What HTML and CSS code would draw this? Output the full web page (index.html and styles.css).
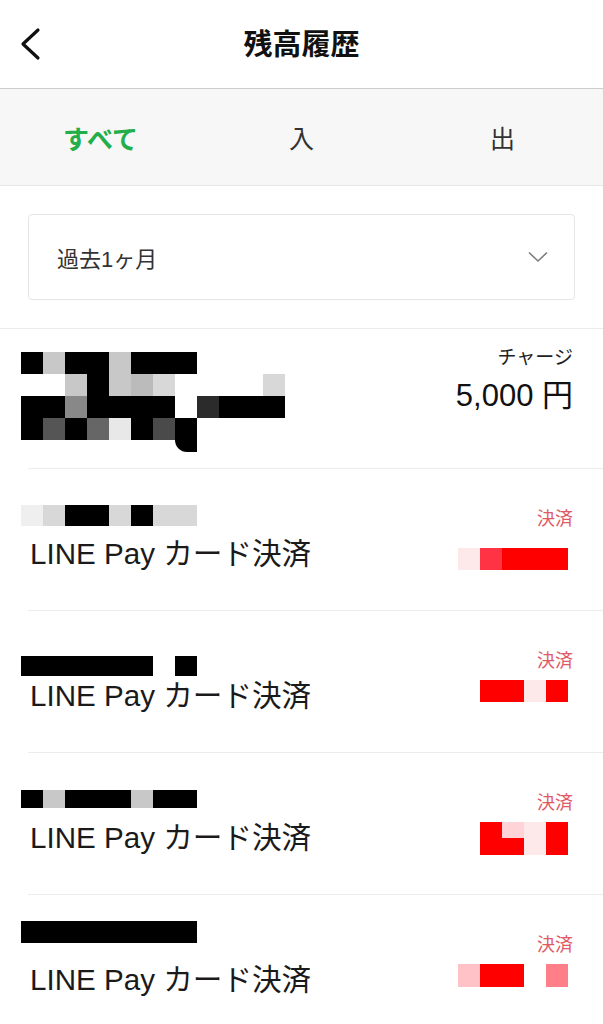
FILE: index.html
```html
<!DOCTYPE html>
<html lang="ja">
<head>
<meta charset="utf-8">
<title>残高履歴</title>
<link rel="stylesheet" href="styles.css">
</head>
<body>
<header class="topbar">
  <button class="back" aria-label="戻る">
    <svg width="24" height="34" viewBox="0 0 24 34"><path d="M20 3 L5 17 L20 31" fill="none" stroke="#111" stroke-width="3.2" stroke-linecap="round" stroke-linejoin="round"/></svg>
  </button>
  <h1 class="title">残高履歴</h1>
  <span class="spacer"></span>
</header>

<nav class="tabs">
  <span class="tab active">すべて</span>
  <span class="tab">入</span>
  <span class="tab">出</span>
</nav>

<section class="filter">
  <div class="select">
    <span>過去1ヶ月</span>
    <svg width="20" height="12" viewBox="0 0 20 12"><path d="M1 1.5 L10 10 L19 1.5" fill="none" stroke="#7d7d7d" stroke-width="1.6"/></svg>
  </div>
</section>

<ul class="history">
  <li class="txn txn-charge">
    <div class="charge-left">
      <div class="mosaic cols-12 big">
        <i class="k"></i><i class="gc"></i><i class="k"></i><i class="k"></i><i class="gc"></i><i class="k"></i><i class="k"></i><i class="k"></i><i></i><i></i><i></i><i></i>
        <i></i><i></i><i class="gc"></i><i class="k"></i><i class="gc"></i><i class="gb"></i><i class="gd"></i><i></i><i></i><i></i><i></i><i class="gd"></i>
        <i class="k"></i><i class="k"></i><i class="g8"></i><i class="k"></i><i class="k"></i><i class="k"></i><i class="k"></i><i></i><i class="d2"></i><i class="k"></i><i class="k"></i><i class="k"></i>
        <i class="k"></i><i class="d5"></i><i class="k"></i><i class="d6"></i><i class="ge"></i><i class="k"></i><i class="d4"></i><i class="k"></i><i></i><i></i><i></i><i></i>
        <i></i><i></i><i></i><i></i><i></i><i></i><i></i><i class="k tail"></i><i></i><i></i><i></i><i></i>
      </div>
    </div>
    <div class="charge-right">
      <span class="charge-kind">チャージ</span>
      <span class="charge-amount">5,000 円</span>
    </div>
  </li>

  <li class="txn">
    <div class="txn-left">
      <div class="mosaic cols-8 name off-36 h21">
        <i class="gf"></i><i class="gd"></i><i class="k"></i><i class="k"></i><i class="gd"></i><i class="k"></i><i class="gd"></i><i class="gd"></i>
      </div>
      <span class="label">LINE Pay カード決済</span>
    </div>
    <div class="txn-right">
      <span class="kind">決済</span>
      <div class="mosaic cols-5 amount lower h22">
        <i class="p1"></i><i class="r3"></i><i class="r"></i><i class="r"></i><i class="r"></i>
      </div>
    </div>
  </li>

  <li class="txn">
    <div class="txn-left">
      <div class="mosaic cols-8 name off-45 h20">
        <i class="k"></i><i class="k"></i><i class="k"></i><i class="k"></i><i class="k"></i><i class="k"></i><i></i><i class="k"></i>
      </div>
      <span class="label">LINE Pay カード決済</span>
    </div>
    <div class="txn-right">
      <span class="kind">決済</span>
      <div class="mosaic cols-5 amount h22">
        <i></i><i class="r"></i><i class="r"></i><i class="p1"></i><i class="r"></i>
      </div>
    </div>
  </li>

  <li class="txn">
    <div class="txn-left">
      <div class="mosaic cols-8 name off-37 h18">
        <i class="k"></i><i class="gc"></i><i class="k"></i><i class="k"></i><i class="k"></i><i class="gc"></i><i class="k"></i><i class="k"></i>
      </div>
      <span class="label">LINE Pay カード決済</span>
    </div>
    <div class="txn-right">
      <span class="kind">決済</span>
      <div class="mosaic cols-5 amount two-rows">
        <i></i><i class="r"></i><i class="p2"></i><i class="p1"></i><i class="r"></i>
        <i></i><i class="r"></i><i class="r"></i><i class="p1"></i><i class="r"></i>
      </div>
    </div>
  </li>

  <li class="txn">
    <div class="txn-left">
      <div class="mosaic cols-8 name off-26 h22">
        <i class="k"></i><i class="k"></i><i class="k"></i><i class="k"></i><i class="k"></i><i class="k"></i><i class="k"></i><i class="k"></i>
      </div>
      <span class="label">LINE Pay カード決済</span>
    </div>
    <div class="txn-right">
      <span class="kind">決済</span>
      <div class="mosaic cols-5 amount h23">
        <i class="p3"></i><i class="r"></i><i class="r"></i><i></i><i class="p7"></i>
      </div>
    </div>
  </li>
</ul>
</body>
</html>
```

FILE: styles.css
```css
* {
  box-sizing: border-box;
  margin: 0;
  padding: 0;
}

body {
  font-family: "Liberation Sans", "Noto Sans CJK JP", sans-serif;
  background: #fff;
  color: #111;
  width: 603px;
  overflow: hidden;
}

/* header */
.topbar {
  height: 89px;
  border-bottom: 1px solid #cdcdcd;
  display: grid;
  grid-template-columns: 80px 1fr 80px;
  align-items: center;
}

.back {
  border: 0;
  background: none;
  display: flex;
  align-items: center;
  padding-left: 18px;
  height: 40px;
}

.title {
  text-align: center;
  font-size: 29px;
  font-weight: 700;
  line-height: 36px;
  padding-top: 2px;
  color: #111;
}

/* tabs */
.tabs {
  display: grid;
  grid-template-columns: repeat(3, 1fr);
  height: 97px;
  background: #f7f7f7;
  border-bottom: 1px solid #e6e6e6;
  align-items: center;
  text-align: center;
  font-size: 25px;
  color: #333;
}

.tab.active {
  color: #22ae4a;
  font-weight: 700;
  font-size: 26px;
}

/* filter */
.filter {
  padding: 28px;
}

.select {
  height: 86px;
  border: 1px solid #e6e6e6;
  border-radius: 4px;
  display: flex;
  align-items: center;
  justify-content: space-between;
  padding: 0 26px 0 28px;
  font-size: 22px;
  color: #333;
}

/* list */
.history {
  list-style: none;
  border-top: 1px solid #ececec;
}

.txn {
  height: 142px;
  display: flex;
  justify-content: space-between;
  padding: 0 30px 0 21px;
  background: linear-gradient(#ececec, #ececec) right bottom / calc(100% - 28px) 1px no-repeat;
}

.txn-charge {
  height: 140px;
}

.charge-left {
  padding-top: 23px;
}

.charge-right {
  display: flex;
  flex-direction: column;
  align-items: flex-end;
  padding-top: 17px;
}

.charge-kind {
  font-size: 19px;
  line-height: 24px;
  color: #222;
}

.charge-amount {
  margin-top: 7px;
  font-size: 31px;
  line-height: 38px;
  color: #111;
}

.txn-left {
  display: grid;
  grid-template-rows: 67px 36px;
  align-items: start;
}

.label {
  font-size: 29.6px;
  line-height: 36px;
  padding-left: 9px;
  color: #1a1a1a;
  white-space: nowrap;
}

.txn-right {
  display: flex;
  flex-direction: column;
  align-items: flex-end;
  padding-top: 38px;
}

.kind {
  font-size: 18px;
  line-height: 24px;
  color: #e05a66;
}

/* mosaic (pixelated redactions) */
.mosaic {
  display: grid;
}

.mosaic i {
  display: block;
}

.cols-12 { grid-template-columns: repeat(12, 22px); }
.cols-8 { grid-template-columns: repeat(8, 22px); }
.cols-5 { grid-template-columns: repeat(5, 22px); }

.big { grid-template-rows: 22px 22px 22px 22px 12px; }
.two-rows { grid-template-rows: 16px 17px; }

.h18 { grid-template-rows: 18px; }
.h20 { grid-template-rows: 20px; }
.h21 { grid-template-rows: 21px; }
.h22 { grid-template-rows: 22px; }
.h23 { grid-template-rows: 23px; }

.off-26 { margin-top: 26px; }
.off-36 { margin-top: 36px; }
.off-37 { margin-top: 37px; }
.off-45 { margin-top: 45px; }

.amount {
  margin-top: 7px;
  margin-right: 5px;
}

.amount.lower {
  margin-top: 17px;
}

.tail { border-bottom-left-radius: 12px; }

.k { background: #000; }
.d2 { background: #2b2b2b; }
.d4 { background: #4a4a4a; }
.d5 { background: #555; }
.d6 { background: #666; }
.g8 { background: #888; }
.gb { background: #bbb; }
.gc { background: #c8c8c8; }
.gd { background: #d8d8d8; }
.ge { background: #e8e8e8; }
.gf { background: #efefef; }

.r { background: #ff0000; }
.r3 { background: #ff3344; }
.p1 { background: #fde8ea; }
.p2 { background: #ffd3d7; }
.p3 { background: #ffc2c6; }
.p7 { background: #ff7f88; }
```
